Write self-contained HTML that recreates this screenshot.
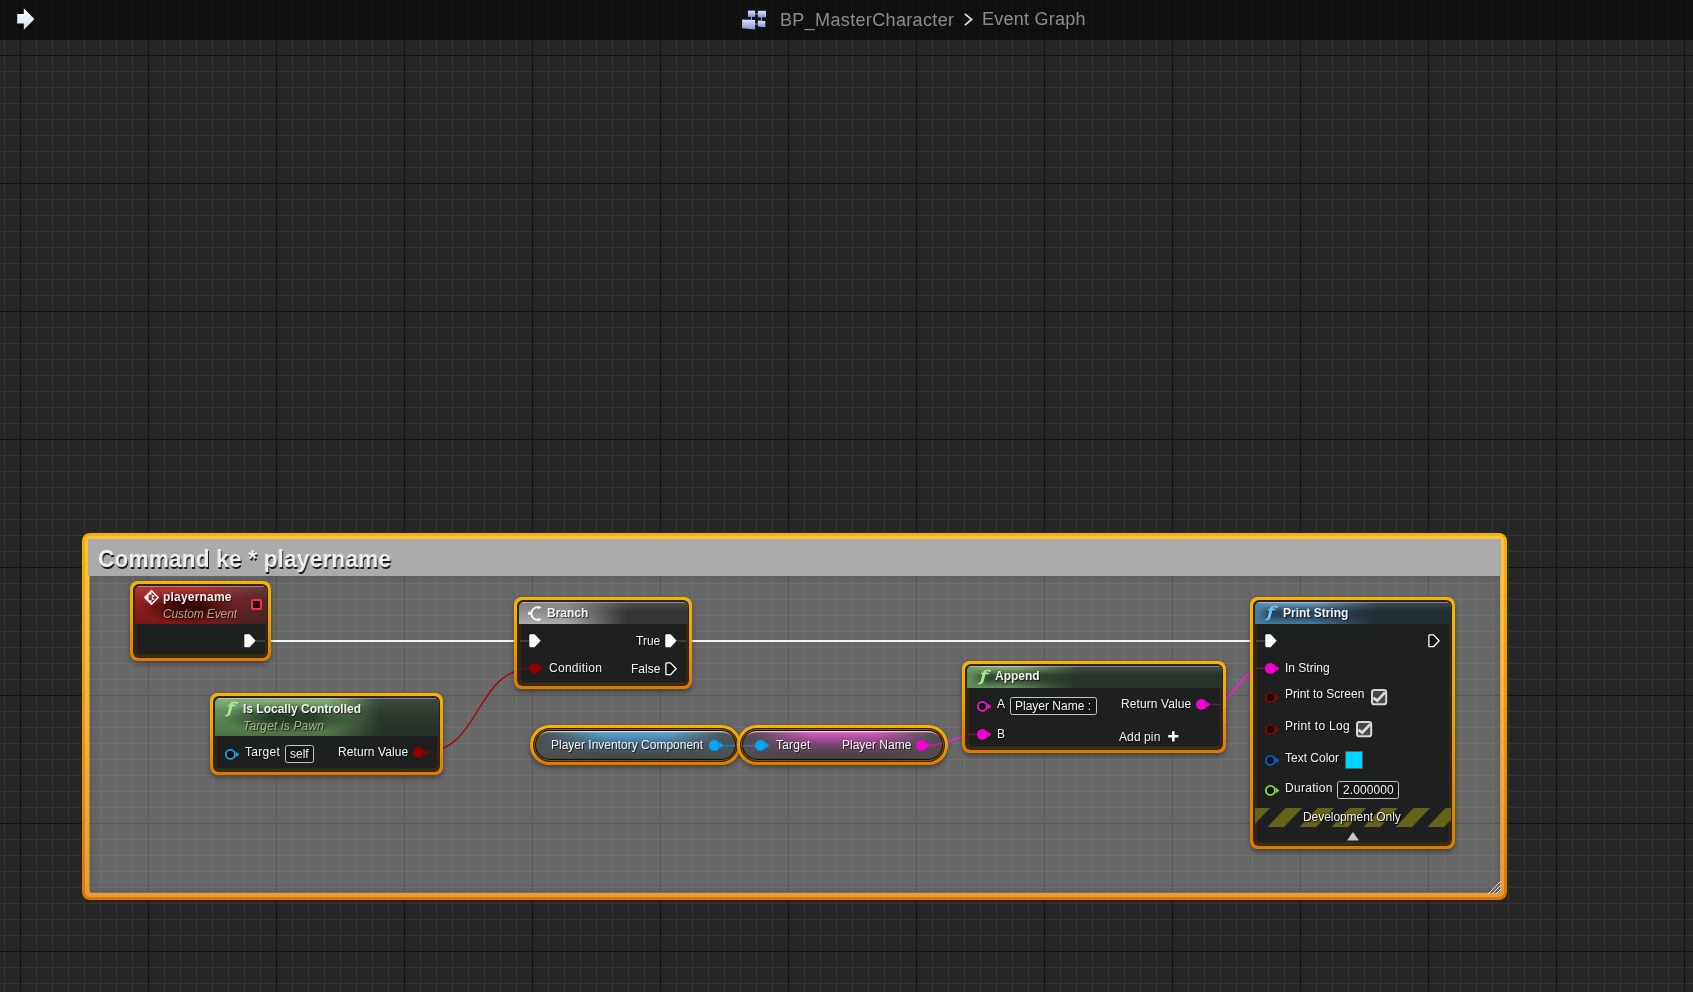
<!DOCTYPE html>
<html lang="en">
<head>
<meta charset="utf-8">
<title>BP_MasterCharacter - Event Graph</title>
<style>
*{box-sizing:border-box;margin:0;padding:0}
html,body{width:1693px;height:992px;overflow:hidden;background:#262626}
body{position:relative;font-family:"Liberation Sans",sans-serif;font-size:12px;color:#f0f0f0}
#grid{position:absolute;left:0;top:0;width:1693px;height:992px;
 background-color:#262626;
 background-image:
  linear-gradient(to right,#121212 1px,transparent 1px),
  linear-gradient(to bottom,#121212 1px,transparent 1px),
  linear-gradient(to right,#343434 1px,transparent 1px),
  linear-gradient(to bottom,#343434 1px,transparent 1px);
 background-size:128px 128px,128px 128px,16px 16px,16px 16px;
 background-position:20px 0,0 55px,4px 0,0 7px;}
#topbar{position:absolute;left:0;top:0;width:1693px;height:40px;background:rgba(0,0,0,.58)}
.abs{position:absolute}
.t{will-change:transform;position:absolute;white-space:nowrap;line-height:14px;height:14px;color:#f2f2f2;text-shadow:1px 1px 0 rgba(0,0,0,.6)}
.b{font-weight:bold}
.i{font-style:italic}
#crumb .t{font-size:18px;letter-spacing:.35px;line-height:20px;height:20px;color:#8c8c8c;text-shadow:none}
/* comment */
#comment{position:absolute;left:82px;top:533px;width:1425px;height:367px;border-radius:8px;
 background:linear-gradient(to bottom,#f6b208 0%,#f0a000 40%,#e07a02 100%)}
#comment .hole{position:absolute;left:6.5px;top:6.5px;right:6.5px;bottom:7px;background:#262626;overflow:hidden}
#comment .chead{position:absolute;left:0;top:0;right:0;height:36.5px;background:#ababab}
#comment .cbody{position:absolute;left:0;top:36.5px;right:0;bottom:0}
#ctitle{position:absolute;left:98px;top:546px;font-size:24px;line-height:26px;font-weight:bold;color:#f0f0f0;white-space:nowrap;
 text-shadow:1px 1.5px .6px rgba(0,0,0,.85);letter-spacing:.22px;transform:scaleX(.94);transform-origin:0 0;will-change:transform}
/* nodes */
.node{position:absolute;border-radius:8px;background:linear-gradient(to bottom,#f8b400 0%,#f2a200 45%,#df7800 100%);box-shadow:0 3px 5px rgba(0,0,0,.35)}
.node .ring{position:absolute;left:3px;top:3px;right:3px;bottom:3px;border-radius:6px;background:#2e220c}
.node .body{position:absolute;left:4.5px;top:4.5px;right:4.5px;bottom:4.5px;border-radius:5px;background:#1d201e;overflow:hidden;
 box-shadow:inset 0 0 0 2px rgba(74,48,6,.55),inset 0 -3px 0 0 rgba(74,48,6,.5)}
.node .hd{position:absolute;left:0;top:0;right:0}
.node .hd:after{content:"";position:absolute;left:0;top:0;right:0;height:1px;background:rgba(255,255,255,.35)}
.var{border-radius:20px}
.var .ring{border-radius:17px}
.var .body{border-radius:16.5px;left:4px;top:4px;right:4px;bottom:4px;box-shadow:inset 0 0 0 1px rgba(175,105,0,.75),inset 0 0 0 2px #171000,inset 0 4.3px .8px -1px rgba(255,250,228,.72),inset 0 -3px 2px -1px rgba(0,0,0,.35)}
.box{position:absolute;border:1px solid #c4c4c4;border-radius:2.5px;background:rgba(0,0,0,.25)}
.fi{font-family:"DejaVu Serif",serif;font-style:italic;font-weight:normal;-webkit-text-stroke:.75px currentColor;font-size:15.5px;line-height:20px;height:28px;padding:4px 8px;text-shadow:none;transform:scaleX(1.3);transform-origin:8px 50%}
svg{position:absolute;overflow:visible}
</style>
</head>
<body>
<div id="grid"></div>

<!-- comment box -->
<div class="abs" style="left:89px;top:575.8px;width:1411.5px;height:317.2px;background:rgba(255,255,255,.3);box-shadow:inset 0 0 12px 1px rgba(0,0,0,.13)"></div>
<svg style="left:82px;top:533px" width="1425" height="367" viewBox="0 0 1425 367">
 <defs>
  <linearGradient id="cg" x1="0" y1="0" x2="0" y2="1">
   <stop offset="0" stop-color="#f7b200"/><stop offset=".45" stop-color="#ef9a00"/><stop offset="1" stop-color="#dc7600"/>
  </linearGradient>
 </defs>
 <path fill-rule="evenodd" fill="url(#cg)" d="M8,0 H1417 A8,8 0 0 1 1425,8 V359 A8,8 0 0 1 1417,367 H8 A8,8 0 0 1 0,359 V8 A8,8 0 0 1 8,0 Z M10,6.2 H1415.7 A2.5,2.5 0 0 1 1418.2,8.7 V357.3 A2.5,2.5 0 0 1 1415.7,359.8 H10 A2.5,2.5 0 0 1 7.5,357.3 V8.7 A2.5,2.5 0 0 1 10,6.2 Z"/>
 <path fill-rule="evenodd" fill="rgba(255,238,205,.3)" d="M8,2.8 H1417 A5.2,5.2 0 0 1 1422.2,8 V359 A5.2,5.2 0 0 1 1417,364.1 H8 A5.2,5.2 0 0 1 2.9,359 V8 A5.2,5.2 0 0 1 8,2.8 Z M10,6.2 H1415.7 A2.5,2.5 0 0 1 1418.2,8.7 V357.3 A2.5,2.5 0 0 1 1415.7,359.8 H10 A2.5,2.5 0 0 1 7.5,357.3 V8.7 A2.5,2.5 0 0 1 10,6.2 Z"/>
 <!-- resize grip -->
 <g stroke="#e6e6e6" stroke-width="1" stroke-linecap="round">
  <line x1="1406.5" y1="360.5" x2="1418.5" y2="348.5"/>
  <line x1="1410.5" y1="360.5" x2="1418.5" y2="352.5"/>
  <line x1="1414.5" y1="360.5" x2="1418.5" y2="356.5"/>
 </g>
</svg>
<div class="abs" style="left:88.2px;top:539.2px;width:1412.5px;height:36.6px;background:#ababab"></div>
<div id="ctitle">Command ke * playername</div>

<svg style="left:0;top:0" width="1693" height="992" viewBox="0 0 1693 992" fill="none">
 <path d="M256,641 H530" stroke="#f4f4f4" stroke-width="2.2"/>
 <path d="M677,641 H1266" stroke="#f4f4f4" stroke-width="2.2"/>
 <path d="M425,752 C480,752 476,668.5 531,668.5" stroke="#a80000" stroke-width="1.35"/>
 <path d="M720,745.5 H756" stroke="#1787c0" stroke-width="1.6"/>
 <path d="M928,745.5 C950,745.5 955,734.5 977,734.5" stroke="#ff19d6" stroke-width="1.6"/>
 <path d="M1208,704.4 C1238,704.4 1236,668.4 1266,668.4" stroke="#ff19d6" stroke-width="1.6"/>
</svg>
<div class="node " style="left:130px;top:581px;width:141px;height:80px"><div class="ring"></div><div class="body"><div class="hd" style="height:38.5px;background:linear-gradient(to bottom,rgba(255,255,255,.09) 0,rgba(255,255,255,0) 45%,rgba(0,0,0,.14) 100%),linear-gradient(to right,transparent 0,transparent 48%,rgba(72,40,40,.82) 92%,rgba(72,40,40,.82) 100%),radial-gradient(ellipse 38% 44% at 42% 56%,rgba(52,6,6,.92) 0,rgba(52,6,6,.92) 30%,transparent 100%),linear-gradient(to bottom,#a82626 0,#971f1f 30%,#8c1b1b 100%)"></div></div></div>
<div class="node " style="left:514px;top:597px;width:178px;height:92px"><div class="ring"></div><div class="body"><div class="hd" style="height:22px;background:linear-gradient(to bottom,rgba(255,255,255,.13) 0,rgba(255,255,255,0) 42%),linear-gradient(100deg,transparent 0,transparent 28%,#343634 64%,#343634 100%),linear-gradient(to bottom,#747474 0,#adadad 100%)"></div></div></div>
<div class="node " style="left:210px;top:693px;width:233px;height:82px"><div class="ring"></div><div class="body"><div class="hd" style="height:38.5px;background:linear-gradient(to bottom,rgba(255,255,255,.09) 0,rgba(255,255,255,0) 45%,rgba(0,0,0,.14) 100%),linear-gradient(to right,transparent 0,transparent 50%,#2b382c 74%,#2b382c 100%),radial-gradient(ellipse 32% 40% at 34% 52%,rgba(40,58,40,.95) 0,rgba(40,58,40,.95) 30%,transparent 100%),linear-gradient(to bottom,#7dab73 0,#628e5b 30%,#58844f 100%)"></div></div></div>
<div class="node " style="left:962px;top:661px;width:264px;height:92px"><div class="ring"></div><div class="body"><div class="hd" style="height:22.5px;background:linear-gradient(to bottom,rgba(255,255,255,.13) 0,rgba(255,255,255,0) 42%),linear-gradient(100deg,transparent 0,transparent 20%,#29342a 43%,#29342a 100%),linear-gradient(to right,#5f8c57 0,#5f8c57 1.5%,transparent 8%),linear-gradient(to bottom,transparent 10%,rgba(42,64,42,.85) 44%,rgba(42,64,42,.85) 64%,transparent 97%),linear-gradient(to bottom,#6f9d66 0,#5c8a54 100%)"></div></div></div>
<div class="node " style="left:1250px;top:597px;width:205px;height:252px"><div class="ring"></div><div class="body"><div class="hd" style="height:22px;background:linear-gradient(to bottom,rgba(255,255,255,.13) 0,rgba(255,255,255,0) 42%),linear-gradient(100deg,transparent 0,transparent 30%,#222d34 62%,#222d34 100%),linear-gradient(to right,#467a9d 0,#467a9d 1.5%,transparent 8%),linear-gradient(to bottom,transparent 10%,rgba(34,58,78,.85) 44%,rgba(34,58,78,.85) 64%,transparent 97%),linear-gradient(to bottom,#5288ad 0,#447698 100%)"></div><svg style="left:0;top:206.5px" width="196" height="19" viewBox="0 0 196 19"><path d="M-19.5,19 L-1.5,0 H15 L-3,19 Z" fill="#65621a"/><path d="M12.5,19 L30.5,0 H47 L29,19 Z" fill="#65621a"/><path d="M44.5,19 L62.5,0 H79 L61,19 Z" fill="#65621a"/><path d="M76.5,19 L94.5,0 H111 L93,19 Z" fill="#65621a"/><path d="M108.5,19 L126.5,0 H143 L125,19 Z" fill="#65621a"/><path d="M140.5,19 L158.5,0 H175 L157,19 Z" fill="#65621a"/><path d="M172.5,19 L190.5,0 H207 L189,19 Z" fill="#65621a"/><path d="M204.5,19 L222.5,0 H239 L221,19 Z" fill="#65621a"/></svg></div></div>
<div class="node var" style="left:530px;top:725px;width:210.5px;height:40px"><div class="ring"></div><div class="body" style="background:linear-gradient(to right,rgba(76,81,84,1) 0,rgba(76,81,84,1) 5%,rgba(76,81,84,0) 34%,rgba(76,81,84,0) 66%,rgba(76,81,84,1) 95%,rgba(76,81,84,1) 100%),linear-gradient(to bottom,rgba(100,176,218,.95) 0,rgba(84,158,204,.9) 20%,rgba(62,120,158,.6) 48%,rgba(70,100,120,0) 78%),linear-gradient(to bottom,#54595c 0,#4b4f52 45%,#454849 100%)"></div></div>
<div class="node var" style="left:737.2px;top:725px;width:211px;height:40px"><div class="ring"></div><div class="body" style="background:linear-gradient(to right,rgba(84,76,82,1) 0,rgba(84,76,82,1) 5%,rgba(84,76,82,0) 34%,rgba(84,76,82,0) 66%,rgba(84,76,82,1) 95%,rgba(84,76,82,1) 100%),linear-gradient(to bottom,rgba(222,104,204,.95) 0,rgba(205,84,188,.9) 20%,rgba(148,62,134,.6) 48%,rgba(110,70,105,0) 78%),linear-gradient(to bottom,#5e555b 0,#4f484d 45%,#464245 100%)"></div></div>
<svg style="left:0;top:0" width="1693" height="992" viewBox="0 0 1693 992" fill="none">
 <g stroke="#ffffff" stroke-width="1.4" opacity=".2">
  <path d="M256,641 H265"/><path d="M520,641 H529"/><path d="M677.5,641 H686"/><path d="M1256,641 H1265"/>
 </g>
 <g stroke="#b00000" stroke-width="1.4" opacity=".45">
  <path d="M427,752.2 H437"/><path d="M520,668.6 H529"/>
 </g>
 <g stroke="#f21ad0" stroke-width="1.4" opacity=".32">
  <path d="M968,734.5 H977"/><path d="M1210.5,704.4 H1220"/><path d="M1256,668.4 H1265"/>
 </g>
 <path d="M720,745.6 H735.5 M742.5,745.6 H756" stroke="#1682ba" stroke-width="1.9" opacity=".9"/>
 <path d="M928,745.5 C935,745.5 938,744.4 942.5,743.2" stroke="#f21ad0" stroke-width="1.5" opacity=".6"/>
</svg>
<svg style="left:143.5px;top:589.5px" width="15" height="15" viewBox="0 0 15 15">
 <path d="M7.5,0.8 L14.2,7.5 L7.5,14.2 L0.8,7.5 Z" fill="none" stroke="#fff" stroke-width="1.5" stroke-linejoin="round"/>
 <path d="M7.5,0.8 L0.8,7.5 L7.5,14.2 L7.5,10.3 H4.6 V4.7 H7.5 Z" fill="#fff"/>
 <path d="M10.4,5.9 H8.3 V9.1 H10.4" fill="none" stroke="#fff" stroke-width="1.1"/>
</svg>
<span class="t b" style="left:163px;top:590px;letter-spacing:.2px">playername</span>
<span class="t i" style="left:163px;top:607px;color:#b9a27c;letter-spacing:-.12px">Custom Event</span>
<div class="abs" style="left:251px;top:599px;width:11px;height:11px;border:2px solid #ff2e43;border-radius:2.5px;background:#1e0000"></div>
<svg style="left:244.0px;top:634.2px" width="12" height="13.6" viewBox="0 0 12 13.6"><path d="M1.6,0.3 H5.6 L11.7,6.8 L5.6,13.3 H1.6 Q0.3,13.3 0.3,12 V1.6 Q0.3,0.3 1.6,0.3 Z" fill="#fff" stroke="#fff" stroke-width="0" stroke-linejoin="round"/></svg>
<svg style="left:528px;top:605.5px" width="15" height="16" viewBox="0 0 15 16" fill="none" stroke="#fff" stroke-linecap="butt" stroke-linejoin="round">
 <path d="M0.1,7.3 H4" stroke-width="3"/>
 <path d="M11,1.35 A6.3,6.3 0 1 0 11,13.65" stroke-width="1.8"/>
 <path d="M9.6,-0.3 L13.7,1.5 L9.6,3.3 Z" fill="#fff" stroke="none"/>
 <path d="M9.6,11.8 L13.7,13.6 L9.6,15.4 Z" fill="#fff" stroke="none"/>
</svg>
<span class="t b" style="left:547px;top:606px;">Branch</span>
<svg style="left:529.2px;top:634.2px" width="12" height="13.6" viewBox="0 0 12 13.6"><path d="M1.6,0.3 H5.6 L11.7,6.8 L5.6,13.3 H1.6 Q0.3,13.3 0.3,12 V1.6 Q0.3,0.3 1.6,0.3 Z" fill="#fff" stroke="#fff" stroke-width="0" stroke-linejoin="round"/></svg>
<span class="t" style="left:636px;top:634px;">True</span>
<svg style="left:665.2px;top:634.2px" width="12" height="13.6" viewBox="0 0 12 13.6"><path d="M1.6,0.3 H5.6 L11.7,6.8 L5.6,13.3 H1.6 Q0.3,13.3 0.3,12 V1.6 Q0.3,0.3 1.6,0.3 Z" fill="#fff" stroke="#fff" stroke-width="0" stroke-linejoin="round"/></svg>
<svg style="left:529.0px;top:663.2px" width="15" height="10.8" viewBox="0 0 15 10.8"><circle cx="5.4" cy="5.4" r="5.35" fill="#8f0000"/><path d="M10.6,2.2 L14.3,5.4 L10.6,8.6 Z" fill="#8f0000"/></svg>
<span class="t" style="left:549px;top:661px;letter-spacing:.28px">Condition</span>
<span class="t" style="left:631px;top:662px;">False</span>
<svg style="left:665.2px;top:662.2px" width="12" height="13.6" viewBox="0 0 12 13.6"><path d="M1.8,0.9 H5.5 L11.1,6.8 L5.5,12.7 H1.8 Q0.9,12.7 0.9,11.8 V1.8 Q0.9,0.9 1.8,0.9 Z" fill="rgba(0,0,0,.35)" stroke="#fff" stroke-width="1.3" stroke-linejoin="round"/></svg>
<span class="t fi" style="left:219px;top:694px;color:#a6ea94">f</span>
<span class="t b" style="left:243px;top:702px;">Is Locally Controlled</span>
<span class="t i" style="left:243px;top:719px;color:#a3b383;letter-spacing:.15px">Target is Pawn</span>
<svg style="left:225.0px;top:748.8px" width="15" height="10.8" viewBox="0 0 15 10.8"><circle cx="5.4" cy="5.4" r="4.45" fill="#0e0e0e" stroke="#1a9ee6" stroke-width="1.8"/><path d="M10.6,2.2 L14.3,5.4 L10.6,8.6 Z" fill="#1a9ee6"/></svg>
<span class="t" style="left:245px;top:745px;letter-spacing:.3px">Target</span>
<div class="box" style="left:285px;top:745.3px;width:29px;height:17.700000000000045px"></div>
<span class="t" style="left:290px;top:747px;">self</span>
<span class="t" style="left:338px;top:745px;letter-spacing:.1px">Return Value</span>
<svg style="left:413.3px;top:746.8px" width="15" height="10.8" viewBox="0 0 15 10.8"><circle cx="5.4" cy="5.4" r="5.35" fill="#8f0000"/><path d="M10.6,2.2 L14.3,5.4 L10.6,8.6 Z" fill="#8f0000"/></svg>
<span class="t" style="left:551px;top:738px;">Player Inventory Component</span>
<svg style="left:709.2px;top:740.2px" width="15" height="10.8" viewBox="0 0 15 10.8"><circle cx="5.4" cy="5.4" r="5.35" fill="#00a8f4"/><path d="M10.6,2.2 L14.3,5.4 L10.6,8.6 Z" fill="#00a8f4"/></svg>
<svg style="left:755.2px;top:740.2px" width="15" height="10.8" viewBox="0 0 15 10.8"><circle cx="5.4" cy="5.4" r="5.35" fill="#00a8f4"/><path d="M10.6,2.2 L14.3,5.4 L10.6,8.6 Z" fill="#00a8f4"/></svg>
<span class="t" style="left:776px;top:738px;letter-spacing:.2px">Target</span>
<span class="t" style="left:842px;top:738px;">Player Name</span>
<svg style="left:916.2px;top:740.2px" width="15" height="10.8" viewBox="0 0 15 10.8"><circle cx="5.4" cy="5.4" r="5.35" fill="#f600d2"/><path d="M10.6,2.2 L14.3,5.4 L10.6,8.6 Z" fill="#f600d2"/></svg>
<span class="t fi" style="left:972px;top:661.5px;color:#a6ea94">f</span>
<span class="t b" style="left:995px;top:669px;">Append</span>
<svg style="left:977.1px;top:700.7px" width="15" height="10.8" viewBox="0 0 15 10.8"><circle cx="5.4" cy="5.4" r="4.45" fill="#0e0e0e" stroke="#f21ad0" stroke-width="1.8"/><path d="M10.6,2.2 L14.3,5.4 L10.6,8.6 Z" fill="#f21ad0"/></svg>
<span class="t" style="left:997px;top:697px;">A</span>
<div class="box" style="left:1010px;top:697.3px;width:87px;height:17.5px"></div>
<span class="t" style="left:1015px;top:699px;">Player Name :</span>
<span class="t" style="left:1121px;top:697px;letter-spacing:.1px">Return Value</span>
<svg style="left:1196.3px;top:699.0px" width="15" height="10.8" viewBox="0 0 15 10.8"><circle cx="5.4" cy="5.4" r="5.35" fill="#f600d2"/><path d="M10.6,2.2 L14.3,5.4 L10.6,8.6 Z" fill="#f600d2"/></svg>
<svg style="left:977.1px;top:729.1px" width="15" height="10.8" viewBox="0 0 15 10.8"><circle cx="5.4" cy="5.4" r="5.35" fill="#f600d2"/><path d="M10.6,2.2 L14.3,5.4 L10.6,8.6 Z" fill="#f600d2"/></svg>
<span class="t" style="left:997px;top:727px;">B</span>
<span class="t" style="left:1119px;top:730px;letter-spacing:.1px">Add pin</span>
<svg style="left:1168.4px;top:731.4px" width="10.6" height="10.6" viewBox="0 0 10.6 10.6"><path d="M5.3,0.2 V10.4 M0.2,5.3 H10.4" stroke="#fff" stroke-width="2.5"/></svg>
<span class="t fi" style="left:1259px;top:597.5px;color:#72c3ff">f</span>
<span class="t b" style="left:1283px;top:606px;">Print String</span>
<svg style="left:1265.2px;top:634.2px" width="12" height="13.6" viewBox="0 0 12 13.6"><path d="M1.6,0.3 H5.6 L11.7,6.8 L5.6,13.3 H1.6 Q0.3,13.3 0.3,12 V1.6 Q0.3,0.3 1.6,0.3 Z" fill="#fff" stroke="#fff" stroke-width="0" stroke-linejoin="round"/></svg>
<svg style="left:1428.2px;top:634.2px" width="12" height="13.6" viewBox="0 0 12 13.6"><path d="M1.8,0.9 H5.5 L11.1,6.8 L5.5,12.7 H1.8 Q0.9,12.7 0.9,11.8 V1.8 Q0.9,0.9 1.8,0.9 Z" fill="rgba(0,0,0,.35)" stroke="#fff" stroke-width="1.3" stroke-linejoin="round"/></svg>
<svg style="left:1265.0px;top:663.0px" width="15" height="10.8" viewBox="0 0 15 10.8"><circle cx="5.4" cy="5.4" r="5.35" fill="#f600d2"/><path d="M10.6,2.2 L14.3,5.4 L10.6,8.6 Z" fill="#f600d2"/></svg>
<span class="t" style="left:1285px;top:661px;">In String</span>
<svg style="left:1265.0px;top:691.9px" width="15" height="10.8" viewBox="0 0 15 10.8"><circle cx="5.4" cy="5.4" r="4.45" fill="#0e0e0e" stroke="#8f0000" stroke-width="1.8"/><path d="M10.6,2.2 L14.3,5.4 L10.6,8.6 Z" fill="#8f0000"/></svg>
<span class="t" style="left:1285px;top:687px;">Print to Screen</span>
<svg style="left:1265.0px;top:724.0px" width="15" height="10.8" viewBox="0 0 15 10.8"><circle cx="5.4" cy="5.4" r="4.45" fill="#0e0e0e" stroke="#8f0000" stroke-width="1.8"/><path d="M10.6,2.2 L14.3,5.4 L10.6,8.6 Z" fill="#8f0000"/></svg>
<span class="t" style="left:1285px;top:719px;letter-spacing:.3px">Print to Log</span>
<svg style="left:1265.0px;top:755.0px" width="15" height="10.8" viewBox="0 0 15 10.8"><circle cx="5.4" cy="5.4" r="4.45" fill="#0e0e0e" stroke="#0062d8" stroke-width="1.8"/><path d="M10.6,2.2 L14.3,5.4 L10.6,8.6 Z" fill="#0062d8"/></svg>
<span class="t" style="left:1285px;top:751px;">Text Color</span>
<svg style="left:1265.0px;top:784.7px" width="15" height="10.8" viewBox="0 0 15 10.8"><circle cx="5.4" cy="5.4" r="4.45" fill="#0e0e0e" stroke="#85e336" stroke-width="1.8"/><path d="M10.6,2.2 L14.3,5.4 L10.6,8.6 Z" fill="#85e336"/></svg>
<span class="t" style="left:1285px;top:781px;letter-spacing:.28px">Duration</span>
<svg style="left:1370.9px;top:688.8px" width="16.2" height="16.3" viewBox="0 0 16.2 16.3"><rect x="1" y="1" width="14.2" height="14.3" rx="2.4" fill="#474747" stroke="#d8d8d8" stroke-width="2"/><path d="M2.4,8.8 L6.3,11.7 L14,3.4" fill="none" stroke="#dcdcdc" stroke-width="2.8"/></svg>
<svg style="left:1355.9px;top:720.9px" width="16.2" height="16.3" viewBox="0 0 16.2 16.3"><rect x="1" y="1" width="14.2" height="14.3" rx="2.4" fill="#474747" stroke="#d8d8d8" stroke-width="2"/><path d="M2.4,8.8 L6.3,11.7 L14,3.4" fill="none" stroke="#dcdcdc" stroke-width="2.8"/></svg>
<div class="abs" style="left:1345px;top:751px;width:18px;height:18px;background:#00d5ff;border:1px solid #5a5a5a"></div>
<div class="box" style="left:1337px;top:781px;width:62px;height:18px"></div>
<span class="t" style="left:1343px;top:783px;letter-spacing:.1px">2.000000</span>
<span class="t" style="left:1303px;top:810px;letter-spacing:-.06px;text-shadow:1px 1px 1px #000,0 0 2px rgba(0,0,0,.8)">Development Only</span>
<svg style="left:1346.6px;top:831.6px" width="12" height="8.6" viewBox="0 0 12 8.6"><path d="M6,0 L12,8.6 H0 Z" fill="#c9c9c9"/></svg>
<div id="topbar"></div>
<svg style="left:17px;top:7.5px" width="18" height="23" viewBox="0 0 18 23">
 <defs><linearGradient id="ag" x1="0" y1="0" x2="0" y2="1"><stop offset="0" stop-color="#ffffff"/><stop offset=".55" stop-color="#e4eef6"/><stop offset="1" stop-color="#c5d9e8"/></linearGradient></defs>
 <path d="M1.5,17.5 L8,23 L16.5,13.5 Z" fill="rgba(0,0,0,.55)"/>
 <path d="M0.2,6 H6.8 V0.2 L17.4,11 L6.8,21.9 V15.6 H0.2 Z" fill="url(#ag)"/>
</svg>
<svg style="left:742px;top:9.5px" width="25" height="20" viewBox="0 0 25 20">
 <defs><linearGradient id="bg1" x1="0" y1="0" x2="0" y2="1"><stop offset="0" stop-color="#dde4ff"/><stop offset="1" stop-color="#8494d2"/></linearGradient></defs>
 <path d="M12,4 H17 M9.4,6 V11 M19.4,7 V11 M12,14 H17" stroke="#8f9bcf" stroke-width="1.1" fill="none"/>
 <path d="M5.9,0.6 H13.1 V6.9 H5.9 Z" fill="url(#bg1)"/>
 <path d="M15.9,0.8 H24 V7.4 H15.9 Z" fill="url(#bg1)"/>
 <path d="M0.1,9.4 L13.1,10.1 V19.6 L0.1,18.2 Z" fill="url(#bg1)"/>
 <path d="M15.9,10.5 L23.3,11 V17.3 L15.9,16.6 Z" fill="url(#bg1)"/>
</svg>
<svg style="left:964px;top:12.5px" width="9" height="13" viewBox="0 0 9 13"><path d="M0.9,0.8 L7.6,6.5 L0.9,12.2" fill="none" stroke="#e2e2e2" stroke-width="1.7"/></svg>
<div id="crumb">
 <span class="t" style="left:780.2px;top:10px">BP_MasterCharacter</span>
 <span class="t" style="left:982.4px;top:8.8px;letter-spacing:.25px">Event Graph</span>
</div>
</body>
</html>
